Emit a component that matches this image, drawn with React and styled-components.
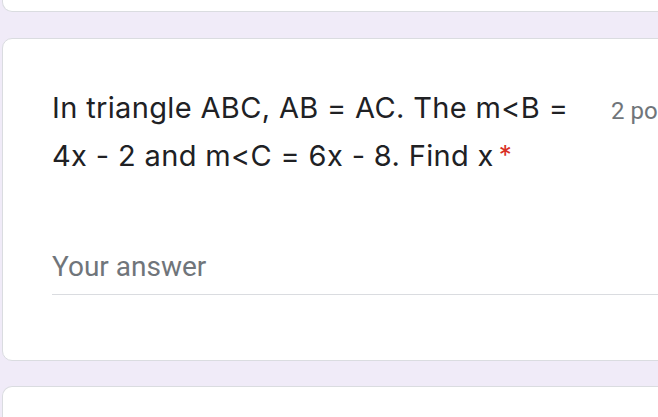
import React from 'react';
import styled, { createGlobalStyle } from 'styled-components';

const GlobalStyle = createGlobalStyle`
  html, body {
    margin: 0;
    padding: 0;
    background: #f0ebf8;
    overflow: hidden;
  }
`;

const Page = styled.div`
  display: flex;
  flex-direction: column;
  gap: 25px;
  padding-left: 2px;
  width: 720px;
`;

const Card = styled.div`
  background: #fff;
  border: 1px solid #dadce0;
  border-radius: 10px;
  box-sizing: border-box;
  ${props => props.stub === 'top' && `
    height: 12px;
    border-top: none;
    border-radius: 0 0 10px 10px;
  `}
  ${props => props.stub === 'bottom' && `
    height: 40px;
    border-bottom: none;
    border-radius: 10px 10px 0 0;
  `}
`;

const QuestionCard = styled(Card)`
  margin-top: 1px;
  padding: 45px 0 65px 49px;
`;

const Header = styled.div`
  display: flex;
  align-items: flex-start;
`;

const Title = styled.div`
  width: 535px;
  font-family: Inter, "Noto Sans", sans-serif;
  font-size: 29px;
  line-height: 47px;
  color: #202124;
  letter-spacing: 0.35px;
`;

const Required = styled.span`
  color: #d93025;
  padding-left: 5px;
  font-size: 26px;
  vertical-align: 2px;
`;

const Points = styled.div`
  margin-left: 24px;
  margin-top: 4px;
  font-family: Roboto, "Liberation Sans", sans-serif;
  font-size: 24px;
  line-height: 47px;
  color: #70757a;
  white-space: nowrap;
`;

const AnswerField = styled.div`
  margin-top: 72px;
  width: 700px;
  height: 43px;
  border-bottom: 1px solid #dadce0;
  font-family: Roboto, "Liberation Sans", sans-serif;
  font-size: 28px;
  line-height: 32px;
  color: #70757a;
`;

export default function App() {
  return (
    <>
      <GlobalStyle />
      <Page>
        <Card stub="top" />
        <QuestionCard>
          <Header>
            <Title>
              In triangle ABC, AB = AC. The m&lt;B = 4x - 2 and m&lt;C = 6x - 8. Find x
              <Required>*</Required>
            </Title>
            <Points>2 points</Points>
          </Header>
          <AnswerField>Your answer</AnswerField>
        </QuestionCard>
        <Card stub="bottom" />
      </Page>
    </>
  );
}
